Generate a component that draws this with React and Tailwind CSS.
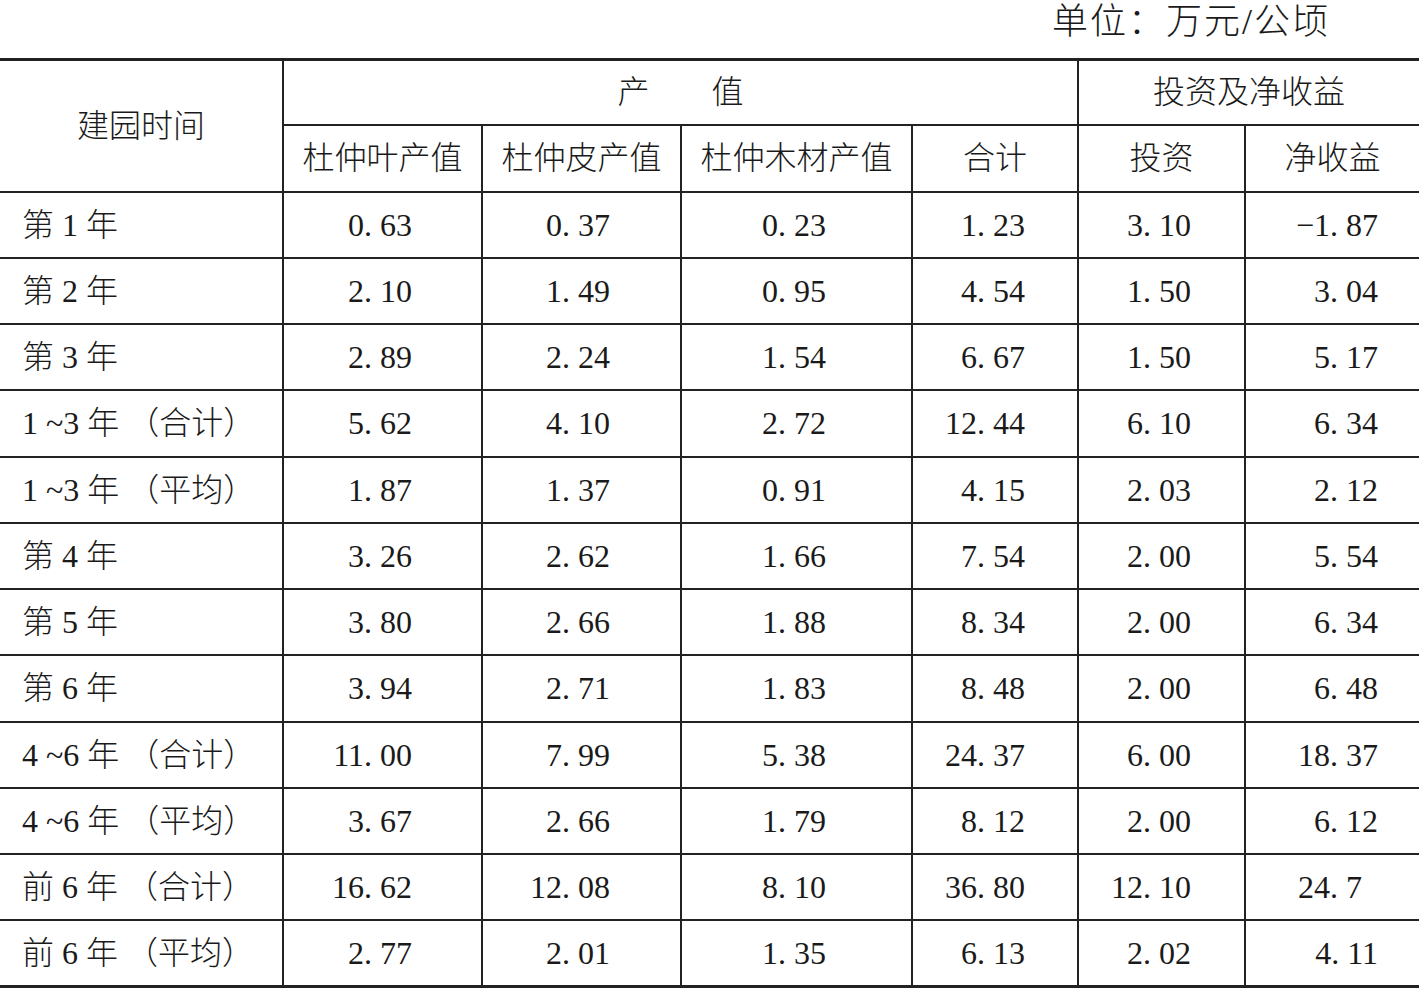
import React from 'react'

const rows = [
  ['第 1 年', '0. 63', '0. 37', '0. 23', '1. 23', '3. 10', '−1. 87'],
  ['第 2 年', '2. 10', '1. 49', '0. 95', '4. 54', '1. 50', '3. 04'],
  ['第 3 年', '2. 89', '2. 24', '1. 54', '6. 67', '1. 50', '5. 17'],
  ['1 ~3 年 （合计）', '5. 62', '4. 10', '2. 72', '12. 44', '6. 10', '6. 34'],
  ['1 ~3 年 （平均）', '1. 87', '1. 37', '0. 91', '4. 15', '2. 03', '2. 12'],
  ['第 4 年', '3. 26', '2. 62', '1. 66', '7. 54', '2. 00', '5. 54'],
  ['第 5 年', '3. 80', '2. 66', '1. 88', '8. 34', '2. 00', '6. 34'],
  ['第 6 年', '3. 94', '2. 71', '1. 83', '8. 48', '2. 00', '6. 48'],
  ['4 ~6 年 （合计）', '11. 00', '7. 99', '5. 38', '24. 37', '6. 00', '18. 37'],
  ['4 ~6 年 （平均）', '3. 67', '2. 66', '1. 79', '8. 12', '2. 00', '6. 12'],
  ['前 6 年 （合计）', '16. 62', '12. 08', '8. 10', '36. 80', '12. 10', '24. 7'],
  ['前 6 年 （平均）', '2. 77', '2. 01', '1. 35', '6. 13', '2. 02', '4. 11'],
]

// right padding per numeric column, numbers sit right-aligned in a centred block
const pads = ['pr-[69px]', 'pr-[70px]', 'pr-[85px]', 'pr-[52px]', 'pr-[53px]', 'pr-[41px]']

export default function App() {
  return (
    <div
      className="w-[1419px] h-[990px] bg-white text-[#1a1a1a] text-[32px] font-light overflow-hidden"
      style={{ fontFamily: '"Liberation Serif", "Noto Sans CJK SC", serif' }}
    >
      {/* unit line */}
      <div className="h-[58px] flex justify-end pr-[89px] pt-[2px] leading-[40px] text-[36px] tracking-[2px]">
        单位：万元/公顷
      </div>

      <table className="w-[1419px] table-fixed border-collapse">
        <colgroup>
          <col className="w-[283px]" />
          <col className="w-[199px]" />
          <col className="w-[199px]" />
          <col className="w-[231px]" />
          <col className="w-[166px]" />
          <col className="w-[167px]" />
          <col className="w-[174px]" />
        </colgroup>
        <thead>
          <tr className="border-t-[3px] border-[#222]">
            <th rowSpan={2} className="font-light text-center border-b-2 border-[#222] h-[132px]">
              建园时间
            </th>
            <th colSpan={4} className="font-light text-center border-l-2 border-b-2 border-[#222] h-[65px]">
              <span>产</span>
              <span className="ml-[62px]">值</span>
            </th>
            <th colSpan={2} className="font-light text-center border-l-2 border-b-2 border-[#222]">
              投资及净收益
            </th>
          </tr>
          <tr>
            {['杜仲叶产值', '杜仲皮产值', '杜仲木材产值', '合计', '投资', '净收益'].map((h) => (
              <th key={h} className="font-light text-center border-l-2 border-b-2 border-[#222] h-[66px]">
                {h}
              </th>
            ))}
          </tr>
        </thead>
        <tbody>
          {rows.map((r, i) => (
            <tr
              key={i}
              className={i === rows.length - 1 ? 'border-b-[3px] border-[#222]' : 'border-b-2 border-[#222]'}
            >
              <td className="h-[66.25px] pl-[22px] whitespace-nowrap">{r[0]}</td>
              {r.slice(1).map((v, j) => (
                <td
                  key={j}
                  className={`h-[66.25px] text-right border-l-2 border-[#222] ${
                    v === '24. 7' ? 'pr-[57px]' : pads[j]
                  }`}
                >
                  {v}
                </td>
              ))}
            </tr>
          ))}
        </tbody>
      </table>
    </div>
  )
}
